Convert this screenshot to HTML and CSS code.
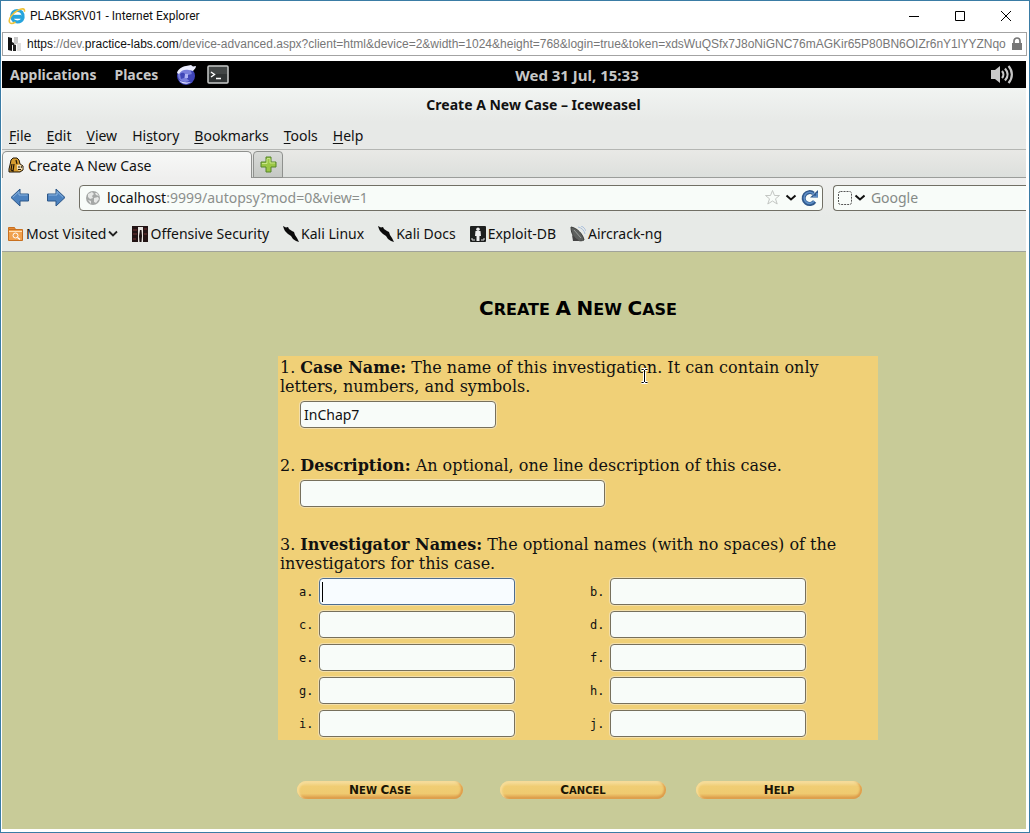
FILE: index.html
```html
<!DOCTYPE html>
<html lang="en">
<head>
<meta charset="utf-8">
<meta name="viewport" content="width=device-width, initial-scale=1">
<title>PLABKSRV01 - Internet Explorer</title>
<link rel="stylesheet" href="styles.css">
</head>
<body>
<div class="window">
  <header class="titlebar">
    <svg class="icon" width="18" height="18" viewBox="0 0 18 18" aria-hidden="true">
      <path d="M4.6 10.3h10.5c.3-4.6-2.300-6.900-5.700-6.900-3.500 0-5.800 2.500-5.800 5.700 0 3.500 2.500 5.800 5.900 5.800 2.600 0 4.600-1.300 5.300-3.400" fill="none" stroke="#27a4dc" stroke-width="3"/>
      <path d="M5 8.800h8.500" stroke="#27a4dc" stroke-width="2"/>
      <path d="M2 15.800C-.8 12.500 5 6 10 3.300c3.500-1.900 7.400-2.300 6.300 1.500" fill="none" stroke="#efc33b" stroke-width="1.600"/>
      <path d="M2 15.800c1.200 1.200 3.800.3 5.500-.8" fill="none" stroke="#efc33b" stroke-width="1.600"/>
    </svg>
    <span class="titlebar-text">PLABKSRV01 - Internet Explorer</span>
    <button class="win-btn" aria-label="Minimize"><svg width="12" height="12" viewBox="0 0 12 12"><path d="M1 6.500h10" stroke="#000"/></svg></button>
    <button class="win-btn" aria-label="Maximize"><svg width="12" height="12" viewBox="0 0 12 12"><path d="M1.500 1.500h9v9h-9z" fill="none" stroke="#000"/></svg></button>
    <button class="win-btn" aria-label="Close"><svg width="12" height="12" viewBox="0 0 12 12"><path d="M1 1l10 10M11 1L1 11" stroke="#000"/></svg></button>
  </header>

  <div class="ie-address">
    <svg class="icon" width="16" height="16" viewBox="0 0 16 16" aria-hidden="true">
      <path d="M7 1h4v7H7z" fill="#c9c9c9"/><path d="M10 7h4v8h-4z" fill="#dedede"/>
      <path d="M1 1l4 1v13l-4-1z" fill="#111"/><path d="M6 8l3 1v6H6z" fill="#222"/><path d="M5 6l2 1v2H5z" fill="#222"/>
    </svg>
    <div class="ie-url" role="textbox" aria-label="Address" contenteditable="true" spellcheck="false"><b>https</b>://dev.<b>practice-labs.com</b>/device-advanced.aspx?client=html&amp;device=2&amp;width=1024&amp;height=768&amp;login=true&amp;token=xdsWuQSfx7J8oNiGNC76mAGKir65P80BN6OIZr6nY1lYYZNqo</div>
    <svg class="icon" width="12" height="14" viewBox="0 0 12 14" aria-label="Secure"><path d="M1 6h10v7H1z" fill="#777"/><path d="M3 6V4a3 3 0 0 1 6 0v2" fill="none" stroke="#777" stroke-width="1.700"/></svg>
  </div>

  <div class="desktop">
    <nav class="panel" aria-label="Desktop panel">
      <div class="panel-left">
        <button>Applications</button>
        <button>Places</button>
        <button class="panel-icon" aria-label="Web browser">
          <svg width="22" height="22" viewBox="0 0 22 22">
            <circle cx="10" cy="12" r="9" fill="#3f45b8"/>
            <circle cx="9" cy="11" r="7" fill="#7a80dc"/>
            <path d="M4 10c2-2 4-1 5 0l-1 4-3 1zM12 11l4-1 1 4-3 3-3-2z" fill="#4047b8"/>
            <path d="M3 16c2 4 8 5 12 2-3 .5-8 1-12-2z" fill="#dfe2ff"/>
            <path d="M1 9c1-4 5-6.500 9-7l5-1 2 1.500L20 2l-.5 2L17 7l-4-1C9 5 5 6 3 10z" fill="#eceeff"/>
            <path d="M9 10h3v4H9z" fill="#aeb3f4"/>
          </svg>
        </button>
        <button class="panel-icon" aria-label="Terminal">
          <svg width="22" height="20" viewBox="0 0 22 20">
            <rect x="1" y="1" width="20" height="17" rx="1" fill="#303434" stroke="#c9cbca" stroke-width="1.500"/>
            <path d="M2 2h18v7H2z" fill="#424646"/>
            <path d="M4 7l3.500 2.500L4 12M9 13.500h5" fill="none" stroke="#fff" stroke-width="1.400"/>
          </svg>
        </button>
      </div>
      <span class="clock">Wed 31 Jul, 15:33</span>
      <button class="panel-icon volume" aria-label="Volume">
        <svg width="24" height="22" viewBox="0 0 24 22" fill="none" stroke="#c8c8c8" stroke-width="2.200">
          <path d="M1 6h4l5-4v17l-5-4H1z" fill="#c8c8c8" stroke="none"/>
          <path d="M12 7c1.800 2 1.800 5 0 7M15 4.500c3.500 4 3.500 8 0 12M18.500 2c4.500 5 4.500 12 0 17"/>
        </svg>
      </button>
    </nav>

    <div class="browser-title">Create A New Case – Iceweasel</div>

    <nav class="menubar" aria-label="Menu">
      <button><u>F</u>ile</button>
      <button><u>E</u>dit</button>
      <button><u>V</u>iew</button>
      <button>Hi<u>s</u>tory</button>
      <button><u>B</u>ookmarks</button>
      <button><u>T</u>ools</button>
      <button><u>H</u>elp</button>
    </nav>

    <div class="tabs">
      <button class="tab">
        <svg width="16" height="16" viewBox="0 0 16 16" aria-hidden="true">
          <path d="M5 1h4l2 2 1 4 3 2v4l-3 2H1v-3l1-4 1-5z" fill="#d69c2f" stroke="#20160a"/>
          <path d="M4 7l-1 6 2 1 1-7M8 3l1 4" stroke="#20160a" stroke-width="1.200" fill="none"/>
          <path d="M9 8l3-.5 2.500 2v3L11 14l-2-2z" fill="#f2e0ba"/>
          <circle cx="11" cy="10" r=".8"/><circle cx="13.500" cy="10" r=".8"/><path d="M10 12.500h3" stroke="#20160a"/>
        </svg>
        Create A New Case
      </button>
      <button class="tab-new" aria-label="New tab">
        <svg width="17" height="17" viewBox="0 0 17 17"><path d="M6 1h5v5h5v5h-5v5H6v-5H1V6h5z" fill="#9bc744" stroke="#55852a"/><path d="M7 2.500h3V7h5M2 7.500h5V3" fill="none" stroke="#c9e58b"/></svg>
      </button>
    </div>

    <div class="toolbar">
      <button class="nav-btn" aria-label="Back"><svg width="20" height="20" viewBox="0 0 20 20"><path d="M10 1v5h8.500v7H10v5L1 9.500z" fill="#4c82bf" stroke="#2b5688"/><path d="M9 3.500V7h8.500M2.800 9.300L9 3.500" fill="none" stroke="#8bb4df"/></svg></button>
      <button class="nav-btn" aria-label="Forward"><svg width="20" height="20" viewBox="0 0 20 20"><path d="M10 1v5H1.500v7H10v5l9-8.500z" fill="#4c82bf" stroke="#2b5688"/><path d="M2.500 7H11V3.500l6 5.800" fill="none" stroke="#8bb4df"/></svg></button>
      <div class="location">
        <svg width="16" height="16" viewBox="0 0 16 16" aria-hidden="true"><circle cx="8" cy="8" r="7" fill="#a5a8a6"/><path d="M3 4l4-2 2 2-2 2 1 2-3 1-2-2zM9 8l4-1 1 2-3 4-2-1zM10 3l2 0 2 3-3-1zM3 10l3 1v3z" fill="#e6e8e6"/></svg>
        <div class="location-text" role="textbox" aria-label="Location" contenteditable="true" spellcheck="false"><b>localhost</b>:9999/autopsy?mod=0&amp;view=1</div>
        <button aria-label="Bookmark this page"><svg width="17" height="17" viewBox="0 0 17 17"><path d="M8.500 1.500l2 5h5l-4 3.300 1.700 5.200-4.700-3-4.700 3 1.700-5.200-4-3.300h5z" fill="none" stroke="#c3c6c3"/></svg></button>
        <button aria-label="History"><svg width="12" height="8" viewBox="0 0 12 8"><path d="M1.500 1.500L6 5.500l4.500-4" fill="none" stroke="#111" stroke-width="2"/></svg></button>
        <button aria-label="Reload"><svg width="18" height="18" viewBox="0 0 18 18"><path d="M13.600 12.500A6 6 0 1 1 12.500 4.500" fill="none" stroke="#30598c" stroke-width="4"/><path d="M9 8.500h8V1z" fill="#30598c"/><path d="M13.300 12A5.600 5.600 0 1 1 13 5.200M12 7.500h4V4" fill="none" stroke="#5e8fc7" stroke-width="1.600"/></svg></button>
      </div>
      <div class="search">
        <button aria-label="Search engine"><svg width="28" height="16" viewBox="0 0 28 16"><rect x="1.500" y="1.500" width="13" height="13" rx="2" fill="none" stroke="#555" stroke-dasharray="2 1"/><path d="M18.500 5.500l4.500 4 4.500-4" fill="none" stroke="#111" stroke-width="2"/></svg></button>
        <input type="search" aria-label="Search" placeholder="Google">
      </div>
    </div>

    <nav class="bookmarks" aria-label="Bookmarks">
      <button class="bookmark">
        <svg width="16" height="16" viewBox="0 0 16 16" aria-hidden="true"><path d="M.5 1.500h6l1 2h-7z" fill="#e58a35" stroke="#c8701f"/><path d="M.5 3.500h14v11H.5z" fill="#f0a14d" stroke="#c8701f"/><path d="M1 5.500h13" stroke="#ffe0b5"/><circle cx="7.500" cy="9.500" r="2.500" fill="#f0a14d" stroke="#fff"/><path d="M9.500 11.500l2.500 2" stroke="#fff" stroke-width="1.500"/></svg>
        Most Visited
        <svg width="10" height="8" viewBox="0 0 10 8" aria-hidden="true"><path d="M1 1.500l4 4 4-4" fill="none" stroke="#222" stroke-width="1.800"/></svg>
      </button>
      <a class="bookmark" href="#"><svg width="16" height="16" viewBox="0 0 16 16" aria-hidden="true"><path d="M0 0h16v16H0z" fill="#221414"/><path d="M6 1h5v15H6z" fill="#e8e4e0"/><path d="M8 4h1.500l.5 6-.5 6H7.500l-.5-6z" fill="#1c1212"/><path d="M1 4h4M1 8h4M12 3h3M12 8h3M1 13h3" stroke="#743434"/></svg>Offensive Security</a>
      <a class="bookmark" href="#"><svg width="16" height="16" viewBox="0 0 16 16" aria-hidden="true"><path d="M0 0l3 1.500L5 1l1 2 3 2 2 1 1 3 2 3 2 4-3-1-3-2-2-3-3-2-3-3-1-2z" fill="#0b0b0b"/></svg>Kali Linux</a>
      <a class="bookmark" href="#"><svg width="16" height="16" viewBox="0 0 16 16" aria-hidden="true"><path d="M0 0l3 1.500L5 1l1 2 3 2 2 1 1 3 2 3 2 4-3-1-3-2-2-3-3-2-3-3-1-2z" fill="#0b0b0b"/></svg>Kali Docs</a>
      <a class="bookmark" href="#"><svg width="16" height="16" viewBox="0 0 16 16" aria-hidden="true"><rect width="16" height="16" rx="1" fill="#1d1f1e"/><circle cx="8" cy="3.200" r="1.800" fill="#eee"/><path d="M5.500 5h5l.5 5H9.500v5h-3v-5H5z" fill="#eee"/><path d="M2 12v2h3M14 12v2h-3" fill="none" stroke="#ddd"/></svg>Exploit-DB</a>
      <a class="bookmark" href="#"><svg width="16" height="16" viewBox="0 0 16 16" aria-hidden="true"><path d="M1 1c6 1 12 7 13 13-4 2-8 0-10-3S1 5 1 1z" fill="#5d605e" stroke="#3b3d3b"/><path d="M2 9l1 6h6z" fill="#444"/><path d="M4 4l7 8" stroke="#9a9e9b"/><path d="M8 1c4 1 6 3 7 7M11 0c3 1 4 3 5 5" fill="none" stroke="#a9bfdc"/></svg>Aircrack-ng</a>
    </nav>

    <main class="page">
      <form class="case-form">
        <h1 class="engraved"><span>C</span>reate <span>A</span> <span>N</span>ew <span>C</span>ase</h1>
        <div class="card">
          <section>
            <p>1. <label for="case"><b>Case Name:</b></label> The name of this investigation. It can contain only letters, numbers, and symbols.</p>
            <input class="field indent" id="case" type="text" value="InChap7">
          </section>
          <section>
            <p>2. <label for="desc"><b>Description:</b></label> An optional, one line description of this case.</p>
            <input class="field wide indent" id="desc" type="text">
          </section>
          <section>
            <p>3. <b>Investigator Names:</b> The optional names (with no spaces) of the investigators for this case.</p>
            <div class="names">
              <label>a.<input class="field active" type="text"></label>
              <label>b.<input class="field" type="text"></label>
              <label>c.<input class="field" type="text"></label>
              <label>d.<input class="field" type="text"></label>
              <label>e.<input class="field" type="text"></label>
              <label>f.<input class="field" type="text"></label>
              <label>g.<input class="field" type="text"></label>
              <label>h.<input class="field" type="text"></label>
              <label>i.<input class="field" type="text"></label>
              <label>j.<input class="field" type="text"></label>
            </div>
          </section>
          <svg class="pointer" width="9" height="16" viewBox="0 0 9 16" aria-hidden="true"><path d="M1.500 1.500h2l1 1 1-1h2M4.500 2v12M1.500 14.500h2l1-1 1 1h2" fill="none" stroke="#fff" stroke-width="3"/><path d="M1.500 1.500h2l1 1 1-1h2M4.500 2v12M1.500 14.500h2l1-1 1 1h2" fill="none" stroke="#000"/></svg>
        </div>
        <div class="actions">
          <button class="pill engraved" type="button"><span>N</span>ew <span>C</span>ase</button>
          <button class="pill engraved" type="button"><span>C</span>ancel</button>
          <button class="pill engraved" type="button"><span>H</span>elp</button>
        </div>
      </form>
    </main>
  </div>
</div>
</body>
</html>
```
FILE: styles.css
```css
* { box-sizing: border-box; }

body {
  margin: 0;
  font-family: "Noto Sans", sans-serif;
  font-size: 14px;
  color: #111;
}

button {
  margin: 0;
  padding: 0;
  border: 0;
  background: none;
  font: inherit;
  color: inherit;
}

svg { display: block; flex: none; }

.window {
  display: flex;
  flex-direction: column;
  min-height: 100vh;
  border: 1px solid #3a7ca5;
  background: #fff;
}

/* Outer window chrome */
.titlebar {
  display: flex;
  align-items: center;
  height: 31px;
  padding: 0 0 2px 7px;
  font-family: Roboto, sans-serif;
  font-size: 12px;
}

.titlebar-text { flex: 1; padding-left: 4px; }

.win-btn {
  display: grid;
  place-items: center;
  width: 46px;
  height: 29px;
}

.ie-address {
  display: flex;
  align-items: center;
  gap: 4px;
  height: 24px;
  margin: 0 2px 5px 1px;
  padding: 0 3px 0 4px;
  border: 1px solid #a3a3a3;
  font-family: "Liberation Sans", sans-serif;
  font-size: 12px;
  color: #777;
}

.ie-url {
  flex: 1;
  min-width: 0;
  overflow: hidden;
  white-space: nowrap;
}

.ie-url b, .location-text b { font-weight: 400; color: #111; }

.desktop {
  display: flex;
  flex: 1;
  flex-direction: column;
  margin: 0 3px 3px 1px;
  background: #e7eae7;
}

/* Desktop panel */
.panel {
  display: grid;
  grid-template-columns: 1fr auto 1fr;
  align-items: center;
  height: 27px;
  padding: 0 12px 0 8px;
  background: #000;
  color: #c8c8c8;
  font-weight: 700;
}

.panel-left { display: flex; align-items: center; gap: 18px; }
.panel-icon { display: grid; place-items: center; }
.panel-icon + .panel-icon { margin-left: -9px; }
.volume { justify-self: end; }
.clock { padding-left: 130px; font-size: 15px; line-height: 20px; }

/* Browser chrome */
.browser-title {
  height: 34px;
  padding-left: 39px;
  background: linear-gradient(#f1f4f2, #e7e9e7);
  font-weight: 700;
  line-height: 34px;
  text-align: center;
}

.menubar {
  display: flex;
  gap: 15px;
  height: 27px;
  padding: 0 7px;
  align-items: center;
  background: #e7e9e7;
}

.menubar u { text-underline-offset: 2px; }

.tabs {
  display: flex;
  gap: 1px;
  height: 29px;
  padding-top: 1px;
  border-top: 1px solid #b4b6b3;
  background: linear-gradient(#e9e9e6, #dcdfdc);
  box-shadow: inset 0 -1px #9b9d9a;
}

.tab {
  display: flex;
  align-items: center;
  gap: 4px;
  width: 250px;
  padding-left: 5px;
  border: 1px solid #8f918e;
  border-bottom: 0;
  border-radius: 5px 5px 0 0;
  background: linear-gradient(#f7f8f7, #efefee);
}

.tab-new {
  display: grid;
  place-items: center;
  width: 30px;
  border: 1px solid #8f918e;
  border-radius: 4px 4px 0 0;
  background: linear-gradient(#d9dbd8, #c5c8c4);
}

.toolbar {
  display: flex;
  align-items: center;
  height: 39px;
  padding-left: 8px;
  background: linear-gradient(#efefee, #e7eae7);
}

.nav-btn { margin-right: 16px; }
.nav-btn + .nav-btn { margin-right: 13px; }

.location, .search {
  display: flex;
  align-items: center;
  min-width: 0;
  height: 26px;
  border: 1px solid #716f65;
  border-radius: 4px;
  background: #f8fcf9;
}

.location {
  flex: 745;
  gap: 4px;
  margin-right: 10px;
  padding: 0 3px 0 5px;
  color: #8b8f8c;
}

.location-text { flex: 1; padding-left: 2px; white-space: nowrap; }

.search {
  flex: 192;
  padding-left: 3px;
  border-right: 0;
  border-radius: 4px 0 0 4px;
}

.search input {
  flex: 1;
  min-width: 0;
  padding: 0 6px;
  border: 0;
  outline: 0;
  background: none;
  font: inherit;
}

.search input::placeholder { color: #858a87; }

.bookmarks {
  display: flex;
  align-items: center;
  gap: 14px;
  height: 35px;
  padding: 0 6px 1px;
  border-bottom: 1px solid #a0a39b;
}

.bookmark {
  display: flex;
  align-items: center;
  gap: 2px;
  color: #111;
  text-decoration: none;
  white-space: nowrap;
}

/* Autopsy page */
.page {
  flex: 1;
  padding: 45px 0 29px 128px;
  background: #c8cb98;
}

.case-form { width: 600px; margin: 0 auto; }

/* Display lettering: capitals with tall initials */
.engraved {
  font-family: "DejaVu Sans", sans-serif;
  font-weight: 700;
  text-transform: uppercase;
  text-align: center;
}

h1 {
  margin: 0 0 35px;
  font-size: 16px;
  line-height: 23px;
  color: #000;
}

h1 span { font-size: 20px; }

.card {
  position: relative;
  display: flex;
  flex-direction: column;
  gap: 28px;
  padding: 2px 2px 3px;
  background: #f0d077;
  font: 16px/19px "DejaVu Serif", serif;
}

.card p { margin: 0 0 5px; }

.field {
  display: block;
  width: 196px;
  height: 27px;
  padding: 0 3px;
  border: 1px solid #77705c;
  border-radius: 4px;
  outline: 0;
  background: #f8fcf9;
  box-shadow: 0 0 0 1px #f3dfab;
  font: 14px "Noto Sans", sans-serif;
  color: #111;
}

.field.wide { width: 305px; }
.field.indent { margin-left: 20px; }

.field.active {
  border-color: #4d6d91;
  background: linear-gradient(#000, #000) 2px center / 1px 20px no-repeat #f8fcff;
}

.names {
  display: grid;
  grid-template-columns: 291px 291px;
  gap: 6px 0;
  padding-left: 19px;
}

.names label {
  display: grid;
  grid-template-columns: 20px auto;
  align-items: center;
  justify-content: start;
  font: 12px "DejaVu Sans Mono", monospace;
}

.actions {
  display: grid;
  grid-template-columns: 204px 202px 190px;
  justify-items: center;
  margin-top: 41px;
}

.pill {
  width: 166px;
  height: 18px;
  border-radius: 9px;
  background: linear-gradient(#f7e0a4, #f0cd74 30%, #efca70 70%, #d99442);
  box-shadow: inset 2px 1px 2px #f6dc98, inset -2px -1px 2px #dd9c4b;
  font-size: 10px;
  line-height: 18px;
  color: #1a1405;
}

.pill span { font-size: 12px; }

.pointer { position: absolute; left: 362px; top: 12px; }
```
